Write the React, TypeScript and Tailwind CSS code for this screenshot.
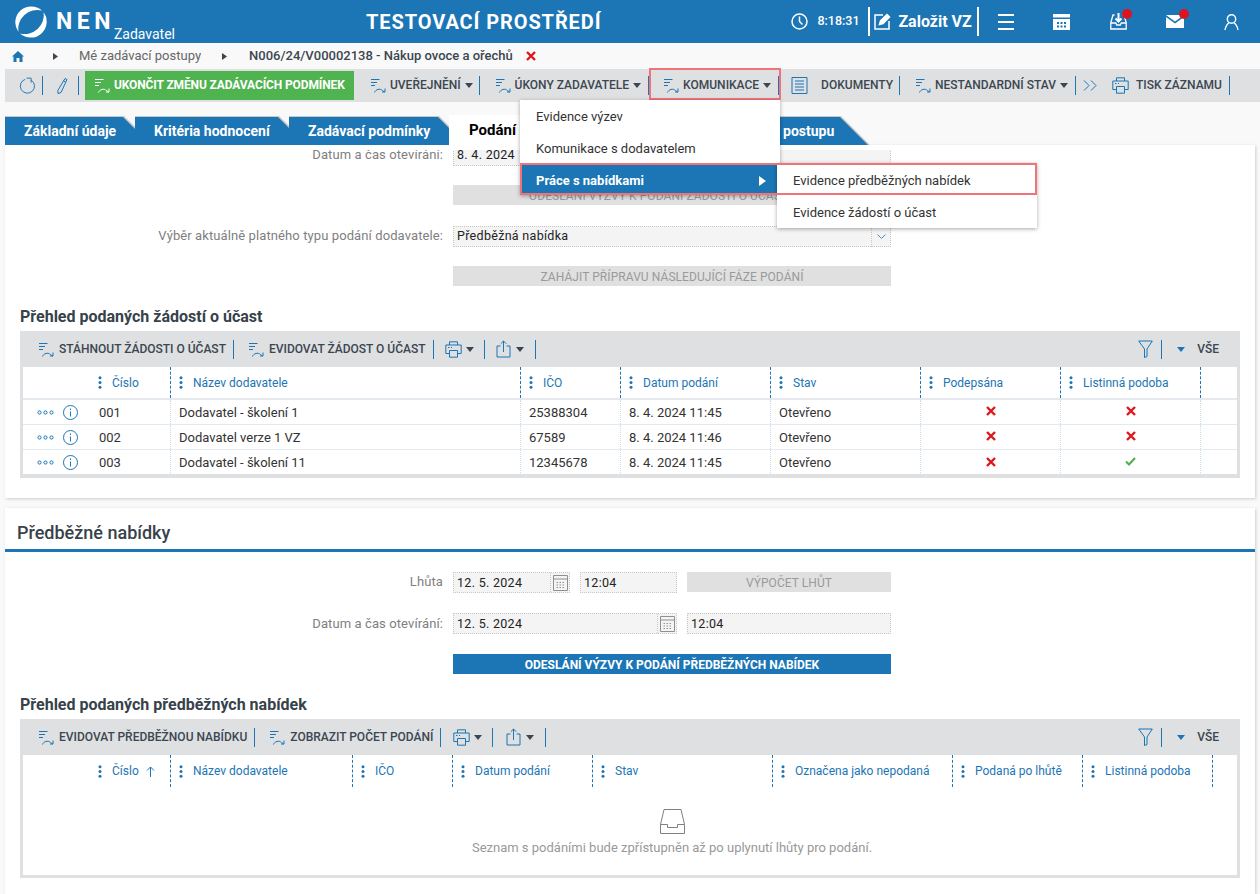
import React from "react";

const Caret = ({ c = "fill-[#3c4650]" }: { c?: string }) => (
  <svg viewBox="0 0 8 5" className={`w-2 h-[5px] ${c}`}>
    <path d="M0 0h8L4 5z" />
  </svg>
);

const ActionIcon = ({ c = "stroke-[#1c75b4]" }: { c?: string }) => (
  <svg viewBox="0 0 16 17" fill="none" className={`w-4 h-[17px] ${c}`} strokeWidth="1">
    <path d="M1 2.5h8.500M1 5.500h6M1 8.500h4" />
    <path d="M4.500 15.500c1-3 5.500-4.500 8-2l2 1.500M15 11.500v3.500h-3" />
  </svg>
);

const Sep = ({ c = "" }: { c?: string }) => <div className={`w-px h-[19px] bg-[#1c75b4] shrink-0 ${c}`} />;

const Printer = () => (
  <svg viewBox="0 0 17 17" fill="none" className="w-[17px] h-[17px] stroke-[#1c75b4]">
    <path d="M4.500 4V.8h8V4M4.500 12.500H.8V4h15.400v8.500h-3.700" />
    <path d="M4.500 9.500h8v6.700h-8zM3 6.500h1.500M6 6.500h1" />
  </svg>
);

const Share = () => (
  <svg viewBox="0 0 15 18" fill="none" className="w-[15px] h-[18px] stroke-[#1c75b4]">
    <path d="M4.500 6H1v11h13V6h-3.500M7.500 12V1M4.800 3.700 7.500 1l2.700 2.700" />
  </svg>
);

const Filter = () => (
  <svg viewBox="0 0 15 18" fill="none" className="w-[15px] h-[18px] stroke-[#1c75b4]">
    <path d="M.7 1h13.600L9 9v7.500l-2.500 1V9z" />
  </svg>
);

const CalendarField = () => (
  <div className="w-[19px] h-full border-l border-dotted border-[#c8c8c8] flex items-center justify-center">
    <svg viewBox="0 0 15 16" fill="none" className="w-[15px] h-4 stroke-[#909090]">
      <path d="M.5.500h14v15H.5zM.5 4h14" />
      <path d="M3.500 7.500h8M3.500 10h8M3.500 12.500h8" strokeDasharray="1.5 1.5" />
    </svg>
  </div>
);

const ToolbarItem = ({ label, caret, gap = "ml-[5px]", className = "" }: { label: string; caret?: boolean; gap?: string; className?: string }) => (
  <div className={`flex items-center ${className}`}>
    <ActionIcon />
    <span className={`${gap} text-[12px] font-medium text-[#3c4650] whitespace-nowrap`}>{label}</span>
    {caret && <div className="ml-1"><Caret /></div>}
  </div>
);

const Cross = ({ size = "w-[10px] h-[10px]" }: { size?: string }) => (
  <svg viewBox="0 0 10 10" className={`${size} stroke-[#e0161d]`} strokeWidth="2.4">
    <path d="M1 1l8 8M9 1l-8 8" />
  </svg>
);

const Check = () => (
  <svg viewBox="0 0 11 9" fill="none" className="w-[11px] h-[9px] stroke-[#4fae50]" strokeWidth="2">
    <path d="M1 4.500 4 7.500 10 1" />
  </svg>
);

const HeaderDots = () => (
  <svg viewBox="0 0 4 13" className="w-1 h-[13px] fill-[#1c75b4] shrink-0">
    <circle cx="2" cy="1.700" r="1.500" />
    <circle cx="2" cy="6.500" r="1.500" />
    <circle cx="2" cy="11.300" r="1.500" />
  </svg>
);

const Tab = ({ step, shape, shade, label, pad }: { step: string; shape: string; shade: string; label: string; pad: string }) => (
  <div className={`relative h-7 shrink-0 ${step}`}>
    <div className={`absolute top-[-1px] left-0 h-[29px] bg-[#c9c9c9] ${shade}`} />
    <div className={`absolute top-0 left-0 h-7 bg-[#1c75b4] ${shape}`} />
    <span className={`relative block leading-[29px] text-[14px] font-bold text-white whitespace-nowrap ${pad}`}>{label}</span>
  </div>
);

const Field = ({ value, width, calendar }: { value: string; width: string; calendar?: boolean }) => (
  <div className={`h-[21px] bg-[#f4f4f4] border border-dotted border-[#c8c8c8] flex items-center justify-between shrink-0 ${width}`}>
    <span className="pl-[3px] pt-px text-[12.5px] text-[#222] tracking-[0.3px]">{value}</span>
    {calendar && <CalendarField />}
  </div>
);

const GrayButton = ({ label, width = "w-[438px]", className = "" }: { label: string; width?: string; className?: string }) => (
  <div className={`h-5 pt-px bg-[#e0e0e0] text-[12px] text-[#9a9a9a] flex items-center justify-center tracking-[0.07px] whitespace-nowrap overflow-hidden shrink-0 ${width} ${className}`}>{label}</div>
);

const labelClass = "w-[438px] text-right text-[13px] tracking-[0.1px] text-[#808080]";
const cellClass = "h-full flex items-center pl-2 pt-px border-l border-dotted border-[#c9dcea]";
const markClass = "w-[140px] h-full flex items-center justify-center pb-[2px] border-l border-dotted border-[#c9dcea]";

const rows = [
  { no: "001", name: "Dodavatel - školení 1", ico: "25388304", date: "8. 4. 2024 11:45", listinna: false },
  { no: "002", name: "Dodavatel verze 1 VZ", ico: "67589", date: "8. 4. 2024 11:46", listinna: false },
  { no: "003", name: "Dodavatel - školení 11", ico: "12345678", date: "8. 4. 2024 11:45", listinna: true },
];

const HeadCell = ({ label, width, first, arrow }: { label: string; width: string; first?: boolean; arrow?: boolean }) => (
  <div className={`h-full flex items-center shrink-0 ${width} ${first ? "pl-[75px]" : "pl-2 border-l border-dashed border-[#1c75b4]"}`}>
    <HeaderDots />
    <span className="ml-[10px] text-[12px] text-[#1c75b4] whitespace-nowrap">{label}</span>
    {arrow && (
      <svg viewBox="0 0 9 11" fill="none" className="w-[9px] h-[11px] ml-[7px] stroke-[#1c75b4]">
        <path d="M4.500 11V1M1 4.500 4.500 1 8 4.500" />
      </svg>
    )}
  </div>
);

const TableTools = ({ first, second, printGap, sepGap }: { first: string; second: string; printGap: string; sepGap: string }) => (
  <div className="h-9 flex items-center pl-[18px] pr-[21px]">
    <ToolbarItem label={first} />
    <Sep c="ml-[7px]" />
    <ToolbarItem label={second} className="ml-[14px]" />
    <Sep c="ml-[7px]" />
    <div className={`flex items-center ${printGap}`}>
      <Printer />
      <div className="ml-1"><Caret /></div>
    </div>
    <Sep c="ml-[10px]" />
    <div className={`flex items-center ${sepGap}`}>
      <Share />
      <div className="ml-[5px]"><Caret /></div>
    </div>
    <Sep c="ml-[11px]" />
    <div className="ml-auto flex items-center">
      <Filter />
      <Sep c="ml-2" />
      <Caret c="ml-[15px] fill-[#1c75b4]" />
      <span className="ml-[12px] text-[12px] font-medium text-[#3c4650]">VŠE</span>
    </div>
  </div>
);

export default function App() {
  return (
    <div className="relative w-[1260px] h-[894px] overflow-hidden bg-[#f9f9f9] font-[Roboto,sans-serif]">
      {/* top bar */}
      <header className="h-[43px] bg-[#1c75b4] flex items-center text-white">
        <svg viewBox="0 0 32 32" className="ml-[15px] w-8 h-8 fill-white shrink-0">
          <path d="M27 4.500A16 16 0 0 0 3.500 26A19 19 0 0 1 27 4.500z" />
          <path d="M5 27.500A16 16 0 0 0 28.500 6A19 19 0 0 1 5 27.500z" />
        </svg>
        <span className="ml-[9px] text-[23px] font-bold tracking-[4.500px] leading-none">NEN</span>
        <span className="-ml-[1px] mt-[25px] text-[14px] leading-none">Zadavatel</span>
        <span className="ml-[191px] text-[20px] font-bold tracking-[0.9px] whitespace-nowrap">TESTOVACÍ PROSTŘEDÍ</span>
        <svg viewBox="0 0 17 17" fill="none" className="ml-[190px] w-[17px] h-[17px] stroke-white" strokeWidth="1.500">
          <circle cx="8.500" cy="8.500" r="7.500" />
          <path d="M8.500 3.500v5l3 3" />
        </svg>
        <span className="ml-[9px] text-[12.5px] font-medium w-[42px]">8:18:31</span>
        <div className="ml-[9px] w-[2px] h-[29px] bg-white" />
        <svg viewBox="0 0 17 17" fill="none" className="ml-[4px] w-[17px] h-[17px] stroke-white" strokeWidth="1.500">
          <path d="M9 2H1v14h14V8" />
          <path d="M5.500 11.500l1-3.500L13 1.500l2.500 2.500-6.500 6.500z" className="fill-white" />
        </svg>
        <span className="ml-[7px] text-[16px] font-bold whitespace-nowrap">Založit VZ</span>
        <div className="ml-[5px] w-[2px] h-[29px] bg-white" />
        <div className="ml-[19px] w-4 flex flex-col gap-[5px]">
          <div className="h-[2px] bg-white" />
          <div className="h-[2px] bg-white" />
          <div className="h-[2px] bg-white" />
        </div>
        <svg viewBox="0 0 17 16" className="ml-[39px] w-[17px] h-4 fill-white">
          <path d="M0 0h17v3.500H0zM0 5h17v11H0z" />
          <path d="M4 8h2v2H4zM7.500 8h2v2h-2zM11 8h2v2h-2zM4 11.500h2v2H4zM7.500 11.500h2v2h-2zM11 11.500h2v2h-2z" className="fill-[#1c75b4]" />
        </svg>
        <div className="relative ml-[40px] w-[17px] h-[17px]">
          <svg viewBox="0 0 17 17" fill="none" className="w-[17px] h-[17px] stroke-white" strokeWidth="1.300">
            <path d="M4.500 2H3L.8 9.500V16h15.400V9.500L14 2h-1.500M.8 10h5l1 2h3.500l1-2h4.800" />
            <path d="M8.500 0v8M5.500 5.500l3 3 3-3" strokeWidth="2" />
          </svg>
          <div className="absolute -top-[4px] right-[-5px] w-[10px] h-[10px] rounded-full bg-[#dc1420]" />
        </div>
        <div className="relative ml-[39px] w-[18px] h-[13px]">
          <svg viewBox="0 0 18 13" className="w-[18px] h-[13px] fill-white">
            <path d="M0 0h18L9 6.500zM0 2l9 6.500L18 2v11H0z" />
          </svg>
          <div className="absolute -top-[6px] right-[-5px] w-[10px] h-[10px] rounded-full bg-[#dc1420]" />
        </div>
        <svg viewBox="0 0 15 16" fill="none" className="ml-[40px] w-[15px] h-4 stroke-white" strokeWidth="1.400">
          <circle cx="7.500" cy="5" r="4.200" />
          <path d="M1 16c.5-4 3-6.800 4-7M14 16c-.5-4-3-6.800-4-7" />
        </svg>
      </header>

      {/* breadcrumb */}
      <div className="h-[26px] flex items-center">
        <svg viewBox="0 0 12 11" className="ml-3 w-3 h-[11px] fill-[#1c75b4]">
          <path d="M6 0l6 5.500h-1.500V11H7.500V7h-3v4h-3V5.500H0z" />
        </svg>
        <svg viewBox="0 0 5 7" className="ml-[29px] w-[5px] h-[7px] fill-[#3c4650]"><path d="M0 0l5 3.500L0 7z" /></svg>
        <span className="ml-[21px] text-[13px] text-[#666] whitespace-nowrap">Mé zadávací postupy</span>
        <svg viewBox="0 0 5 7" className="ml-[21px] w-[5px] h-[7px] fill-[#3c4650]"><path d="M0 0l5 3.500L0 7z" /></svg>
        <span className="ml-[22px] text-[13px] font-medium text-[#3c4650] whitespace-nowrap">N006/24/V00002138 - Nákup ovoce a ořechů</span>
        <Cross size="ml-[13px] w-[10px] h-[10px]" />
      </div>

      {/* main toolbar */}
      <div className="ml-[5px] h-[33px] pb-px bg-[#dee0e2] flex items-center">
        <svg viewBox="0 0 18 18" fill="none" className="ml-[14px] w-[17px] h-[17px] stroke-[#1c75b4]">
          <path d="M12.800 3.200A7.500 7.500 0 1 1 6.500 2.500M8 1.200h4.800v4.800" />
        </svg>
        <Sep c="ml-[6px]" />
        <svg viewBox="0 0 11 17" fill="none" className="ml-[14px] w-[11px] h-[17px] stroke-[#1c75b4]">
          <path d="M8 1.500 10 2.500 4 15.500 1 16.500.8 13.500zM6.500 4l2 1" />
        </svg>
        <Sep c="ml-[10px]" />
        <div className="ml-[6px] w-[269px] h-[29px] bg-[#4fb350] flex items-center pl-[9px] text-white">
          <ActionIcon c="stroke-white" />
          <span className="ml-1 text-[12px] font-bold tracking-[-0.12px] whitespace-nowrap">UKONČIT ZMĚNU ZADÁVACÍCH PODMÍNEK</span>
        </div>
        <ToolbarItem label="UVEŘEJNĚNÍ" caret gap="ml-1" className="ml-4" />
        <Sep c="ml-[6px]" />
        <ToolbarItem label="ÚKONY ZADAVATELE" caret gap="ml-1" className="ml-[15px]" />
        <Sep c="ml-[7px]" />
        <ToolbarItem label="KOMUNIKACE" caret gap="ml-1" className="ml-[14px]" />
        <Sep c="ml-[7px]" />
        <svg viewBox="0 0 17 17" fill="none" className="ml-3 w-[17px] h-[17px] stroke-[#1c75b4]">
          <path d="M1 .5h15v16H1zM4 4h9M4 7h9M4 10h9M4 13h9" />
        </svg>
        <span className="ml-[13px] text-[12px] font-medium text-[#3c4650] whitespace-nowrap">DOKUMENTY</span>
        <Sep c="ml-[6px]" />
        <ToolbarItem label="NESTANDARDNÍ STAV" caret gap="ml-1" className="ml-[15px]" />
        <Sep c="ml-[7px]" />
        <svg viewBox="0 0 14 11" fill="none" className="ml-[7px] w-[14px] h-[11px] stroke-[#1c75b4]">
          <path d="M1 .5 6 5.500 1 10.500M8 .5l5 5-5 5" />
        </svg>
        <div className="ml-[15px]"><Printer /></div>
        <span className="ml-[7px] text-[12px] font-medium text-[#3c4650] whitespace-nowrap">TISK ZÁZNAMU</span>
        <Sep c="ml-[7px]" />
      </div>

      {/* tabs */}
      <div className="mt-[15px] ml-[5px] h-7 flex">
        <Tab step="w-[130px]" shape="w-[148px] [clip-path:polygon(0_0,118px_0,146px_100%,0_100%)]" shade="w-[150px] [clip-path:polygon(0_0,119px_0,149px_100%,0_100%)]" label="Základní údaje" pad="pl-[19px]" />
        <Tab step="w-[154px]" shape="w-[172px] [clip-path:polygon(0_0,143px_0,171px_100%,0_100%)]" shade="w-[175px] [clip-path:polygon(0_0,144px_0,174px_100%,0_100%)]" label="Kritéria hodnocení" pad="pl-[19px]" />
        <Tab step="w-[160px]" shape="w-[178px] [clip-path:polygon(0_0,149px_0,177px_100%,0_100%)]" shade="w-[180px] [clip-path:polygon(0_0,150px_0,179px_100%,0_100%)]" label="Zadávací podmínky" pad="pl-[19px]" />
        <div className="relative w-[81px] h-[30px] -mt-[2px] bg-white pl-5 text-[15px] font-bold text-black leading-[30px] shrink-0">Podání</div>
        <Tab step="w-[340px]" shape="w-[339px] [clip-path:polygon(0_0,310px_0,338px_100%,0_100%)]" shade="w-[340px] [clip-path:polygon(0_0,311px_0,340px_100%,0_100%)]" label="postupu" pad="pl-[253px]" />
      </div>

      {/* first card */}
      <section className="ml-[5px] w-[1250px] h-[353px] bg-white shadow-[1px_1px_3px_rgba(0,0,0,0.18)] pt-[5px]">
        <div className="overflow-hidden">
          <div className="-mt-[5px] h-5 flex items-center">
            <label className={labelClass}>Datum a čas otevírání:</label>
            <div className="ml-[10px]"><Field value="8. 4. 2024" width="w-[438px]" /></div>
          </div>
          <div className="mt-5 ml-[448px]"><GrayButton label="ODESLÁNÍ VÝZVY K PODÁNÍ ŽÁDOSTI O ÚČAST" className="pr-[27px]" /></div>
          <div className="mt-[21px] h-[20px] flex items-center">
            <label className={labelClass}>Výběr aktuálně platného typu podání dodavatele:</label>
            <div className="ml-[10px] relative">
              <Field value="Předběžná nabídka" width="w-[438px]" />
              <div className="absolute right-0 top-0 w-5 h-[21px] border-l border-dotted border-[#c8c8c8] flex items-center justify-center">
                <svg viewBox="0 0 9 5" fill="none" className="w-[9px] h-[5px] stroke-[#4a90c4]"><path d="M.5.500l4 4 4-4" /></svg>
              </div>
            </div>
          </div>
          <div className="mt-5 ml-[448px]"><GrayButton label="ZAHÁJIT PŘÍPRAVU NÁSLEDUJÍCÍ FÁZE PODÁNÍ" /></div>
          <h2 className="mt-[21px] ml-[15px] h-5 text-[16px] leading-5 font-bold text-[#37424a]">Přehled podaných žádostí o účast</h2>
          <div className="mt-1 ml-[15px] w-[1220px] h-[147px] bg-[#dee0e2]">
            <TableTools first="STÁHNOUT ŽÁDOSTI O ÚČAST" second="EVIDOVAT ŽÁDOST O ÚČAST" printGap="ml-[11px]" sepGap="ml-[11px]" />
            <div className="mx-[3px] h-[107px] bg-white">
              <div className="h-[33px] flex border-b-2 border-[#e3e9ee]">
                <HeadCell first label="Číslo" width="w-[147px]" />
                <HeadCell label="Název dodavatele" width="w-[350px]" />
                <HeadCell label="IČO" width="w-[100px]" />
                <HeadCell label="Datum podání" width="w-[150px]" />
                <HeadCell label="Stav" width="w-[150px]" />
                <HeadCell label="Podepsána" width="w-[140px]" />
                <HeadCell label="Listinná podoba" width="w-[140px]" />
                <div className="h-full flex-1 border-l border-dashed border-[#1c75b4]" />
              </div>
              {rows.map((r) => (
                <div key={r.no} className="h-[25px] flex border-b border-[#e3e9ee] text-[13px] text-[#333] items-center last:border-b-0">
                  <div className="w-[147px] flex items-center h-full">
                    <svg viewBox="0 0 17 5" fill="none" className="ml-[14px] w-[17px] h-[5px] stroke-[#1c75b4]">
                      <circle cx="2.500" cy="2.500" r="1.600" />
                      <circle cx="8.500" cy="2.500" r="1.600" />
                      <circle cx="14.500" cy="2.500" r="1.600" />
                    </svg>
                    <svg viewBox="0 0 15 15" fill="none" className="ml-[9px] w-[15px] h-[15px] stroke-[#1c75b4]">
                      <circle cx="7.500" cy="7.500" r="7" />
                      <path d="M7.500 6.500v5M7.500 3.500v1.500" />
                    </svg>
                    <span className="ml-[21px] pt-px">{r.no}</span>
                  </div>
                  <div className={`w-[350px] ${cellClass}`}>{r.name}</div>
                  <div className={`w-[100px] ${cellClass}`}>{r.ico}</div>
                  <div className={`w-[150px] ${cellClass}`}>{r.date}</div>
                  <div className={`w-[150px] ${cellClass}`}>Otevřeno</div>
                  <div className={markClass}><Cross /></div>
                  <div className={markClass}>{r.listinna ? <Check /> : <Cross />}</div>
                  <div className="flex-1 h-full border-l border-dotted border-[#c9dcea]" />
                </div>
              ))}
            </div>
          </div>
        </div>
      </section>

      {/* second card */}
      <section className="mt-[10px] ml-[5px] w-[1250px] h-[386px] bg-white shadow-[1px_1px_3px_rgba(0,0,0,0.18)]">
        <div className="h-[44px] border-b-[3px] border-[#1c75b4] pl-3 pt-[13px] text-[18px] leading-6 font-medium text-[#37424a]">Předběžné nabídky</div>
        <div className="mt-5 flex items-start">
          <label className={`${labelClass} leading-[19px]`}>Lhůta</label>
          <div className="ml-[10px]"><Field value="12. 5. 2024" width="w-[117px]" calendar /></div>
          <div className="ml-[10px]"><Field value="12:04" width="w-[97px]" /></div>
          <div className="ml-[10px]"><GrayButton label="VÝPOČET LHŮT" width="w-[204px]" /></div>
        </div>
        <div className="mt-5 flex items-center">
          <label className={labelClass}>Datum a čas otevírání:</label>
          <div className="ml-[10px]"><Field value="12. 5. 2024" width="w-[224px]" calendar /></div>
          <div className="ml-[10px]"><Field value="12:04" width="w-[204px]" /></div>
        </div>
        <div className="mt-5 ml-[448px] w-[438px] h-5 pt-px bg-[#1c75b4] text-white text-[12px] font-bold flex items-center justify-center">ODESLÁNÍ VÝZVY K PODÁNÍ PŘEDBĚŽNÝCH NABÍDEK</div>
        <h2 className="mt-[21px] ml-[15px] h-5 text-[16px] leading-5 font-bold text-[#37424a]">Přehled podaných předběžných nabídek</h2>
        <div className="mt-1 ml-[15px] w-[1220px] h-[159px] bg-[#dee0e2]">
          <TableTools first="EVIDOVAT PŘEDBĚŽNOU NABÍDKU" second="ZOBRAZIT POČET PODÁNÍ" printGap="ml-3" sepGap="ml-[13px]" />
          <div className="mx-[3px] h-[120px] bg-white">
            <div className="h-8 flex">
              <HeadCell first arrow label="Číslo" width="w-[147px]" />
              <HeadCell label="Název dodavatele" width="w-[182px]" />
              <HeadCell label="IČO" width="w-[100px]" />
              <HeadCell label="Datum podání" width="w-[140px]" />
              <HeadCell label="Stav" width="w-[180px]" />
              <HeadCell label="Označena jako nepodaná" width="w-[180px]" />
              <HeadCell label="Podaná po lhůtě" width="w-[130px]" />
              <HeadCell label="Listinná podoba" width="w-[130px]" />
              <div className="h-full flex-1 border-l border-dashed border-[#1c75b4]" />
            </div>
            <div className="flex flex-col items-center pt-[22px] pl-[84px]">
              <svg viewBox="0 0 25 25" fill="none" className="w-[25px] h-[25px] stroke-[#808080]">
                <path d="M4 .5h17l3.500 15v9H.5v-9zM.5 15.500h7v3h10v-3h7" />
              </svg>
              <p className="mt-1 text-[13px] text-[#999]">Seznam s podáními bude zpřístupněn až po uplynutí lhůty pro podání.</p>
            </div>
          </div>
        </div>
      </section>

      {/* open menu */}
      <div className="absolute left-[649px] top-[68px] w-[132px] h-[32px] border-2 border-[#f0737a]" />
      <div className="absolute left-[520px] top-[100px] w-[260px] h-[95px] bg-white shadow-[0_1px_4px_rgba(0,0,0,0.35)] text-[13px] text-[#333]">
        <div className="h-[32px] flex items-center pl-4 pt-[2px]">Evidence výzev</div>
        <div className="h-[31px] flex items-center pl-4 pt-[3px]">Komunikace s dodavatelem</div>
        <div className="h-[32px] bg-[#1c75b4] flex items-center justify-between pl-4 pr-[14px] pt-[3px] text-white font-bold">
          Práce s nabídkami
          <svg viewBox="0 0 7 10" className="w-[7px] h-[10px] fill-white"><path d="M0 0l7 5-7 5z" /></svg>
        </div>
      </div>
      <div className="absolute left-[777px] top-[163px] w-[260px] h-[65px] bg-white shadow-[0_1px_4px_rgba(0,0,0,0.35)] text-[13px] text-[#333]">
        <div className="h-8 flex items-center pl-4 pt-[3px]">Evidence předběžných nabídek</div>
        <div className="h-[33px] flex items-center pl-4 pt-[3px]">Evidence žádostí o účast</div>
      </div>
      <div className="absolute left-[520px] top-[163px] w-[517px] h-[32px] border-2 border-[#f0737a]" />
    </div>
  );
}
